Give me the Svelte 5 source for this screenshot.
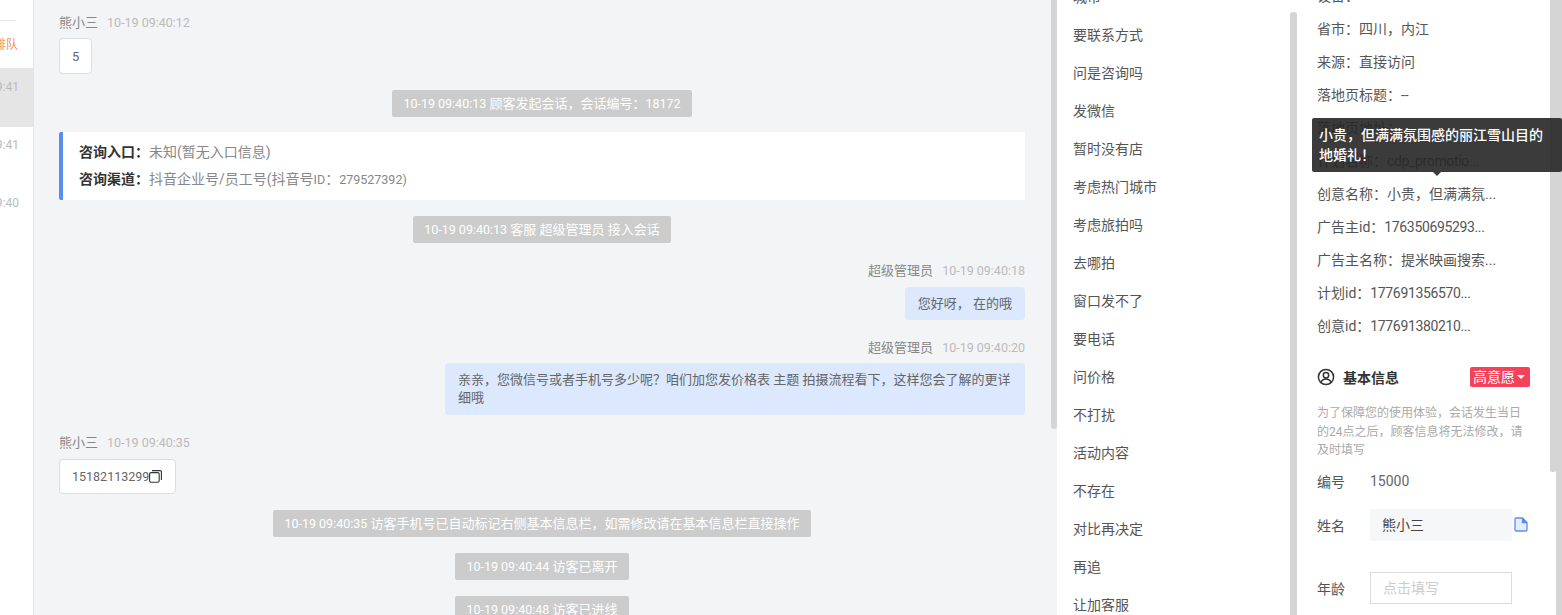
<script>
  const quickReplies = ['城市','要联系方式','问是咨询吗','发微信','暂时没有店','考虑热门城市','考虑旅拍吗','去哪拍','窗口发不了','要电话','问价格','不打扰','活动内容','不存在','对比再决定','再追','让加客服'];
  const details = [
    ['设备：','',false],['省市：','四川，内江',false],['来源：','直接访问',false],['落地页标题：','--',false],['落地页地址：','',false],
    ['计划名称：','cdp_promotio...',true],['创意名称：','小贵，但满满氛...',false],['广告主id：','176350695293...',true],
    ['广告主名称：','提米映画搜索...',false],['计划id：','177691356570...',true],['创意id：','177691380210...',true]
  ];
  const sessions = ['09:41','09:41','09:40'];
</script>

<div class="app">
  <aside class="sessions">
    <div class="rule"></div>
    <div class="queue">排队</div>
    {#each sessions as time, i}
      <div class="session" class:active={i === 0}>{time}</div>
    {/each}
  </aside>

  <main class="chat">
    <div class="feed">
      <div class="meta first"><span class="name">熊小三</span><span class="time">10-19 09:40:12</span></div>
      <div class="bubble visitor short">5</div>

      <div class="system s1"><span class="ts">10-19 09:40:13</span> 顾客发起会话，会话编号：<span class="ts">18172</span></div>

      <div class="card">
        <p><b>咨询入口：</b>未知(暂无入口信息)</p>
        <p><b>咨询渠道：</b>抖音企业号/员工号(抖音号<span class="ts">ID</span>：<span class="ts">279527392)</span></p>
      </div>

      <div class="system s2"><span class="ts">10-19 09:40:13</span> 客服 超级管理员 接入会话</div>

      <div class="meta right m1"><span class="name">超级管理员</span><span class="time">10-19 09:40:18</span></div>
      <div class="bubble agent hello">您好呀， 在的哦</div>

      <div class="meta right m2"><span class="name">超级管理员</span><span class="time">10-19 09:40:20</span></div>
      <div class="bubble agent long">亲亲，您微信号或者手机号多少呢？咱们加您发价格表 主题 拍摄流程看下，这样您会了解的更详细哦</div>

      <div class="meta m3"><span class="name">熊小三</span><span class="time">10-19 09:40:35</span></div>
      <div class="bubble visitor phone"><span class="ts">15182113299</span><svg class="copy" viewBox="0 0 13 13" width="13" height="13" fill="none" stroke="#333" stroke-width="1.1"><rect x="0.6" y="2.6" width="9.6" height="9.6" rx="1.5"/><path d="M3 .6h8a1.4 1.4 0 0 1 1.4 1.4v8"/></svg></div>

      <div class="system s3"><span class="ts">10-19 09:40:35</span> 访客手机号已自动标记右侧基本信息栏，如需修改请在基本信息栏直接操作</div>
      <div class="system s4"><span class="ts">10-19 09:40:44</span> 访客已离开</div>
      <div class="system s4"><span class="ts">10-19 09:40:48</span> 访客已进线</div>
    </div>
    <div class="scroll chat-scroll"><div class="thumb"></div></div>
  </main>

  <section class="replies">
    <ul>
      {#each quickReplies as reply}
        <li>{reply}</li>
      {/each}
    </ul>
  </section>
  <div class="scroll replies-scroll"><div class="thumb"></div></div>

  <section class="profile">
    <dl>
      {#each details as [label, value, numeric]}
        <div class="detail"><dt>{label}</dt><dd class:num={numeric}>{value}</dd></div>
      {/each}
    </dl>

    <header class="basic">
      <svg viewBox="0 0 18 18" width="18" height="18" fill="none" stroke="#333" stroke-width="1.5"><circle cx="9" cy="9" r="7.6"/><circle cx="9" cy="7.2" r="2.7"/><path d="M4 14.2c1-2.3 2.9-3.3 5-3.3s4 1 5 3.3"/></svg>
      <h3>基本信息</h3>
      <span class="tag">高意愿<i></i></span>
    </header>
    <p class="notice">为了保障您的使用体验，会话发生当日的24点之后，顾客信息将无法修改，请及时填写</p>

    <div class="field plain"><label for="code">编号</label><span id="code">15000</span></div>
    <div class="field name-field">
      <label for="nm">姓名</label>
      <div class="value" id="nm">熊小三</div>
      <svg viewBox="0 0 14 15" width="14" height="15" fill="#e6eefc" stroke="#5b8def" stroke-width="1.3"><path d="M1 2.2A1.2 1.2 0 0 1 2.2 1h6.3L13 5.5v7.3a1.2 1.2 0 0 1-1.2 1.2H2.2A1.2 1.2 0 0 1 1 12.8z"/><path d="M8.5 1v4.5H13" fill="#5b8def"/></svg>
    </div>
    <div class="field age-field">
      <label for="age">年龄</label>
      <div class="input" id="age">点击填写</div>
    </div>
  </section>
  <div class="scroll profile-scroll"><div class="thumb"></div></div>
  <div class="outer-track"></div>

  <div class="tooltip">小贵，但满满氛围感的丽江雪山目的地婚礼！</div>
</div>

<style>
  :global(body) { margin: 0; background: #fff; }
  .app {
    position: relative;
    display: flex;
    height: 615px;
    width: 1562px;
    overflow: hidden;
    background: #fff;
    font-family: Roboto, "Noto Sans CJK SC", sans-serif;
    font-size: 14px;
    color: #555;
  }

  /* sessions */
  .sessions {
    width: 33px;
    flex: none;
    border-right: 1px solid #e3e5e9;
    display: flex;
    flex-direction: column;
    align-items: flex-end;
    overflow: hidden;
    white-space: nowrap;
  }
  .rule { width: 16px; height: 1px; background: #e8e8e8; margin: 20px 17px 0 0; align-self: flex-end; }
  .queue { height: 47px; line-height: 49px; padding-right: 15px; font-size: 12px; color: #f0905f; }
  .session {
    align-self: stretch;
    height: 58px;
    box-sizing: border-box;
    display: flex;
    justify-content: flex-end;
    padding: 9px 14px 0 0;
    font-size: 12px;
    line-height: 18px;
    color: #bbb;
  }
  .session.active { background: #e5e5e5; height: 59px; padding-top: 10px; }

  /* chat */
  .chat { flex: none; width: 1023px; display: flex; background: #f3f4f6; }
  .feed {
    flex: 1;
    min-width: 0;
    padding: 13px 26px 0 25px;
    display: flex;
    flex-direction: column;
    font-size: 13px;
    overflow: hidden;
  }
  .ts { font-size: 12.5px; }
  .meta { display: flex; gap: 9px; height: 18px; line-height: 20px; flex: none; }
  .meta.right { justify-content: flex-end; }
  .m1 { margin-top: 18px; }
  .m2 { margin-top: 18px; }
  .m3 { margin-top: 18px; }
  .name { color: #888; }
  .time { color: #bbb; font-size: 12.5px; }
  .bubble {
    flex: none;
    box-sizing: border-box;
    margin-top: 7px;
    line-height: 18px;
    padding: 8px 13px;
    border-radius: 4px;
    width: max-content;
  }
  .visitor { background: #fff; border: 1px solid #dcdde1; color: #666; }
  .short { height: 36px; padding: 9px 12px 0; }
  .phone { height: 35px; width: 117px; padding: 1px 12px 0; display: flex; align-items: center; margin-top: 8px; }
  .copy { margin-top: -1px; }
  .agent { background: #dbe8fd; color: #666; align-self: flex-end; }
  .long { width: 580px; }
  .hello { margin-top: 8px; height: 33px; padding: 8px 13px 0; }
  .system {
    flex: none;
    align-self: center;
    height: 27px;
    line-height: 28px;
    padding: 0 11.5px;
    background: #ccc;
    color: #fff;
    border-radius: 2px;
    white-space: nowrap;
  }
  .s1 { margin-top: 16px; }
  .s2 { margin-top: 16px; }
  .s3 { margin-top: 16px; }
  .s4 { margin-top: 16px; }
  .card {
    flex: none;
    box-sizing: border-box;
    height: 68px;
    margin-top: 15px;
    background: #fff;
    border-left: 4px solid #5b8def;
    border-radius: 2px;
    padding: 7px 16px;
    font-size: 14px;
    color: #888;
  }
  .card p { margin: 0; line-height: 27px; }
  .card b { color: #333; font-weight: 700; }

  /* scrollbars */
  .scroll { flex: none; display: flex; flex-direction: column; }
  .thumb { background: #d5d5d5; }
  .chat-scroll { width: 6px; }
  .chat-scroll .thumb { height: 429px; border-radius: 0 0 3px 3px; }
  .replies-scroll { width: 7px; padding-top: 12px; box-sizing: border-box; }
  .replies-scroll .thumb { flex: 1; border-radius: 3px 3px 0 0; }
  .profile-scroll { width: 6px; }
  .profile-scroll .thumb { height: 472px; border-radius: 0 0 2px 2px; }
  .outer-track { flex: none; width: 6px; background: #d5d5d5; }

  /* quick replies */
  .replies { flex: none; width: 233px; overflow: hidden; }
  .replies ul { list-style: none; margin: -22px 0 0; padding: 0 16px; }
  .replies li { height: 38px; line-height: 38px; color: #555; white-space: nowrap; }

  /* profile */
  .profile { flex: none; width: 253px; padding: 0 20px; box-sizing: border-box; overflow: hidden; }
  dl { margin: -20px 0 0; }
  .detail { display: flex; height: 33px; line-height: 33px; white-space: nowrap; }
  dd { margin: 0; }
  dd.num { letter-spacing: -0.35px; }
  .basic { display: flex; align-items: center; height: 20px; margin-top: 24px; }
  .basic svg { flex: none; }
  h3 { margin: 0 0 0 8px; font-size: 14px; font-weight: 700; color: #333; flex: 1; }
  .tag {
    display: flex;
    align-items: center;
    gap: 2px;
    width: 60px;
    height: 20px;
    box-sizing: border-box;
    padding-left: 3px;
    background: #f5425a;
    color: #fff;
    border-radius: 2px;
    line-height: 20px;
  }
  .tag i { width: 0; height: 0; border: 4px solid transparent; border-top: 4px solid #fff; border-bottom: 0; }
  .notice { margin: 17px 0 0; font-size: 12px; line-height: 18.5px; color: #aaa; }
  .field { display: flex; align-items: center; }
  label { width: 53px; flex: none; color: #555; }
  .plain { height: 20px; margin-top: 11px; color: #777; }
  .plain span { color: #666; }
  .name-field { margin-top: 18px; color: #555; }
  .value { width: 130px; height: 32px; line-height: 32px; padding-left: 12px; background: #f6f7f9; flex: none; color: #444; }
  .name-field svg { margin-left: 2px; flex: none; }
  .age-field { margin-top: 31px; }
  .input { width: 142px; height: 32px; box-sizing: border-box; border: 1px solid #ddd; line-height: 30px; padding-left: 12px; color: #ccc; }

  /* tooltip */
  .tooltip {
    position: absolute;
    left: 1312px;
    top: 118px;
    width: 250px;
    height: 54px;
    box-sizing: border-box;
    padding: 7px 7px;
    background: rgba(40, 40, 40, 0.91);
    border-radius: 2px;
    color: #fff;
    font-weight: 500;
    line-height: 20px;
  }
  .tooltip::after {
    content: "";
    position: absolute;
    left: 121px;
    top: 54px;
    border: 4px solid transparent;
    border-top: 4px solid #3c3c3c;
    border-bottom: 0;
  }
</style>
